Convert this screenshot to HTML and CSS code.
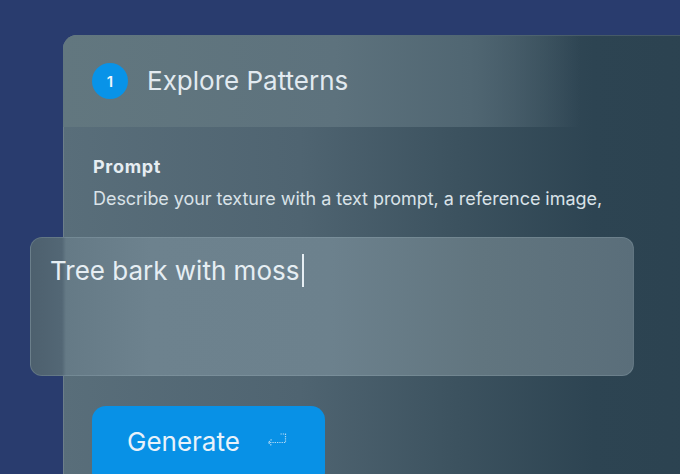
FILE: index.html
```html
<!DOCTYPE html>
<html>
<head>
<meta charset="utf-8">
<link rel="stylesheet" href="styles.css">
</head>
<body>
<div class="card">
  <div class="card-header">
    <span class="badge">1</span>
    <span class="title">Explore Patterns</span>
  </div>
  <div class="card-body">
    <div class="label">Prompt</div>
    <div class="desc">Describe your texture with a text prompt, a reference image,</div>
    <div class="input">
      <span class="input-text">Tree bark with moss</span><span class="caret"></span>
    </div>
    <button class="generate">
      <span class="gen-label">Generate</span>
      <svg class="enter" width="20" height="14" viewBox="0 0 20 14" fill="none" stroke="#b3d9f3" stroke-width="1.2" stroke-dasharray="1.3 1">
        <path d="M13.5 1H18.5V9.5H1.5"/>
        <path d="M4.5 6.5L1.5 9.5L4.5 12.5"/>
      </svg>
    </button>
  </div>
</div>
</body>
</html>
```
FILE: styles.css
```css
html, body {
  margin: 0;
  padding: 0;
}
body {
  background: #293c6e;
  width: 680px;
  height: 474px;
  overflow: hidden;
  font-family: Inter, "Noto Sans", sans-serif;
}
.card {
  margin: 35px 0 0 63px;
  width: 680px;
  height: 500px;
  border-radius: 14px 0 0 0;
  background: linear-gradient(90deg, #596e7a 0%, #4f6471 35%, #3c525f 58%, #2d4452 78%, #2b4250 100%);
  box-shadow: inset 1px 1px 0 rgba(255,255,255,0.12);
}
.card-header {
  height: 92px;
  display: flex;
  align-items: center;
  padding-left: 29px;
  gap: 19px;
  box-sizing: border-box;
  border-radius: 14px 0 0 0;
  background: linear-gradient(90deg, #62777f 0%, #5d727d 40%, #506672 60%, rgba(44,67,81,0) 76%);
}
.badge {
  width: 36px;
  height: 36px;
  border-radius: 50%;
  background: #0893e8;
  color: #f0f6fb;
  font-size: 15px;
  font-weight: 600;
  display: flex;
  align-items: center;
  justify-content: center;
}
.title {
  color: #e2eaf0;
  font-size: 26px;
  font-weight: 400;
  line-height: 32px;
}
.card-body {
  padding: 29px 0 0 30px;
}
.label {
  color: #e6edf2;
  font-size: 18px;
  font-weight: 700;
  line-height: 22px;
  letter-spacing: 0.7px;
}
.desc {
  margin-top: 10px;
  color: #d9e2e8;
  font-size: 18px;
  line-height: 22px;
  letter-spacing: -0.05px;
}
.input {
  margin: 27px 0 0 -63px;
  width: 604px;
  height: 139px;
  box-sizing: border-box;
  border-radius: 12px;
  background: linear-gradient(90deg, #4d606e 0px, #536775 31px, #657a86 35px, #6d828e 120px, #6c818d 300px, #61757f 450px, #5a6e7a 604px);
  border: 1px solid rgba(170,190,200,0.22);
  padding: 16px 0 0 19px;
  display: flex;
  align-items: flex-start;
}
.input-text {
  color: #e6eef3;
  font-size: 26px;
  line-height: 34px;
}
.caret {
  width: 2px;
  height: 33px;
  margin-left: 3px;
  background: #e6eef3;
}
.generate {
  margin: 30px 0 0 -1px;
  width: 233px;
  height: 80px;
  border: none;
  border-radius: 14px;
  background: #0891e6;
  color: #e8f2fa;
  font-family: Inter, "Noto Sans", sans-serif;
  display: flex;
  align-items: flex-start;
  padding: 20px 0 0 35px;
  box-sizing: border-box;
  gap: 27px;
}
.gen-label {
  font-size: 26px;
  line-height: 32px;
}
.enter {
  margin-top: 7px;
}
```
